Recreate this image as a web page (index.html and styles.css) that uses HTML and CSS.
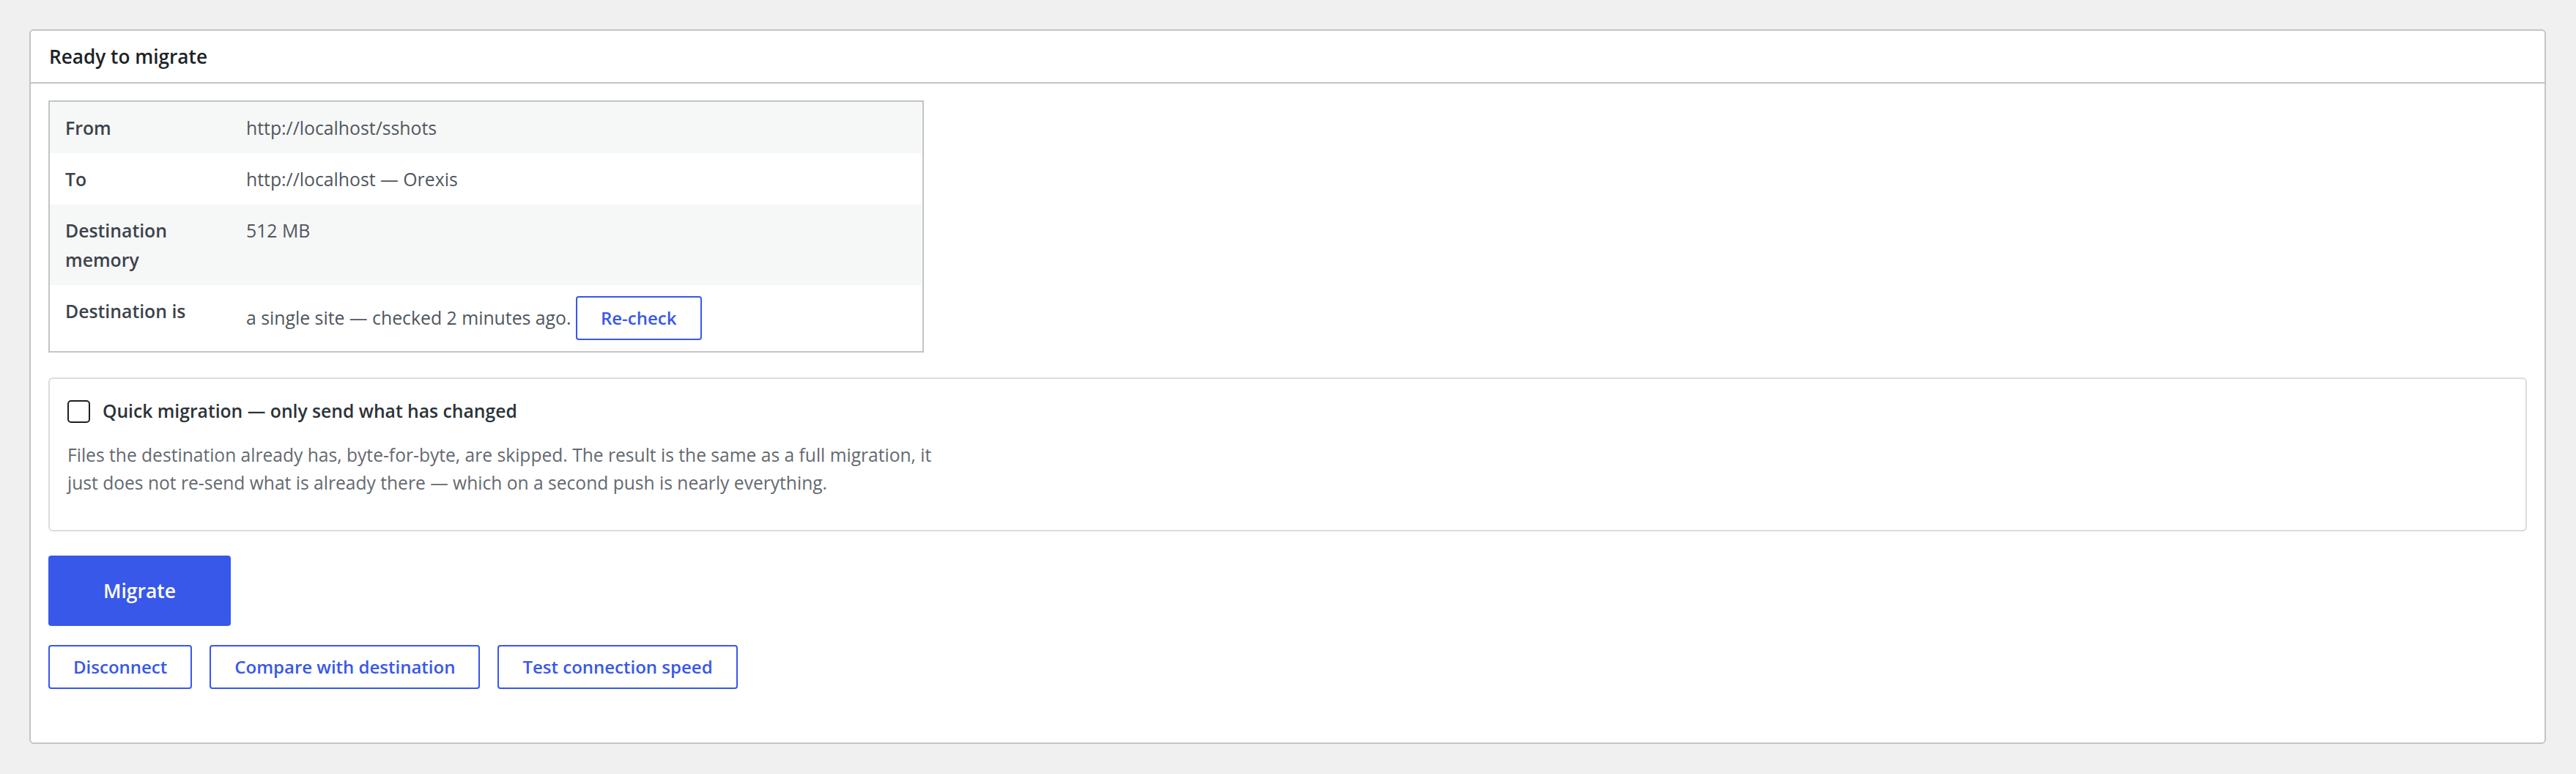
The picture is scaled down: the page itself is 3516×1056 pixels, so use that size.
FILE: index.html
```html
<!DOCTYPE html>
<html lang="en">
<head>
<meta charset="utf-8">
<title>Ready to migrate</title>
<link rel="stylesheet" href="styles.css">
</head>
<body>
<div class="card">
  <div class="card-head">
    <h2 class="card-title">Ready to migrate</h2>
  </div>
  <div class="card-body">
    <table class="summary">
      <tbody>
        <tr class="alt"><th>From</th><td>http://localhost/sshots</td></tr>
        <tr><th>To</th><td>http://localhost — Orexis</td></tr>
        <tr class="alt"><th>Destination memory</th><td>512 MB</td></tr>
        <tr><th>Destination is</th><td>a single site — checked 2 minutes ago. <button class="btn btn-outline" type="button">Re-check</button></td></tr>
      </tbody>
    </table>

    <div class="option-box">
      <label class="option">
        <span class="checkbox"></span>
        <span class="option-label">Quick migration — only send what has changed</span>
      </label>
      <p class="option-desc">Files the destination already has, byte-for-byte, are skipped. The result is the same as a full migration, it just does not re-send what is already there — which on a second push is nearly everything.</p>
    </div>

    <button class="btn btn-primary" type="button">Migrate</button>

    <div class="actions">
      <button class="btn btn-outline" type="button">Disconnect</button>
      <button class="btn btn-outline" type="button">Compare with destination</button>
      <button class="btn btn-outline" type="button">Test connection speed</button>
    </div>
  </div>
</div>
</body>
</html>
```

FILE: styles.css
```css
* { box-sizing: border-box; }

html, body {
  margin: 0;
}

body {
  padding: 40px 41px 42px 40px;
  background: #f0f0f1;
  font-family: "Open Sans", "Noto Sans", "Liberation Sans", sans-serif;
  color: #3c434a;
}

.card {
  background: #fff;
  border: 2px solid #c3c4c7;
  border-radius: 6px;
}

.card-head {
  height: 72px;
  display: flex;
  align-items: center;
  padding: 0 25px;
  border-bottom: 2px solid #c3c4c7;
}

.card-title {
  margin: 0;
  font-size: 26.2px;
  font-weight: 600;
  line-height: 38px;
  color: #1d2327;
}

.card-body {
  padding: 23px 24px 73px;
}

.summary {
  width: 1195px;
  border: 2px solid #c3c4c7;
  border-collapse: separate;
  border-spacing: 0;
}

.summary th,
.summary td {
  padding: 15px 22px;
  font-size: 24.8px;
  line-height: 40px;
  text-align: left;
  vertical-align: top;
}

.summary th {
  width: 246px;
  padding-left: 21px;
  padding-right: 25px;
  font-weight: 600;
  color: #3c434a;
}

.summary td {
  color: #50575e;
}

.summary .alt {
  background: #f6f7f7;
}

.option-box {
  margin-top: 34px;
  border: 2px solid #dcdcde;
  border-radius: 6px;
  padding: 25px 24px 45px;
}

.option {
  display: flex;
  align-items: center;
  gap: 17px;
  height: 38px;
}

.checkbox {
  width: 31px;
  height: 31px;
  border: 2px solid #1e1e1e;
  border-radius: 5px;
  background: #fff;
  flex: none;
}

.option-label {
  font-size: 24.7px;
  font-weight: 600;
  line-height: 38px;
  color: #2c3338;
}

.option-desc {
  margin: 22px 0 0;
  max-width: 1215px;
  font-size: 24.6px;
  line-height: 38px;
  color: #646970;
}

.btn {
  font-family: inherit;
  font-weight: 600;
  border-radius: 4px;
  cursor: pointer;
}

.btn-primary {
  display: block;
  margin-top: 33px;
  height: 96px;
  padding: 0 75px;
  border: 0;
  background: #3858e9;
  color: #fff;
  font-size: 26.5px;
  line-height: 38px;
}

.btn-outline {
  display: inline-block;
  height: 60px;
  padding: 9px 32px;
  border: 2px solid #3858e9;
  background: #fff;
  color: #3858e9;
  font-size: 24px;
  line-height: 38px;
  vertical-align: baseline;
}

.actions {
  display: flex;
  gap: 24px;
  margin-top: 26px;
}
```
